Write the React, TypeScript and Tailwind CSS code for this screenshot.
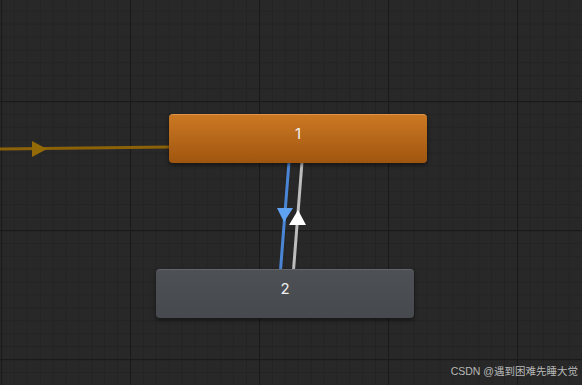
import React from 'react';

// Animator graph canvas: grid background, two state nodes, and transitions.
function GridBackground() {
  return (
    <svg className="absolute inset-0" width="582" height="385">
      <defs>
        <pattern id="minor" width="12.9" height="12.9" x="1" y="10.7" patternUnits="userSpaceOnUse">
          <path d="M0.5 0V12.9M0 0.5H12.9" stroke="#232323" strokeWidth="1" fill="none" />
        </pattern>
        <pattern id="major" width="129" height="129" x="1" y="101" patternUnits="userSpaceOnUse">
          <path d="M0.5 0V129M0 0.5H129" stroke="#1a1a1a" strokeWidth="1.4" fill="none" />
        </pattern>
      </defs>
      <rect width="582" height="385" fill="#282828" />
      <rect width="582" height="385" fill="url(#minor)" />
      <rect width="582" height="385" fill="url(#major)" />
    </svg>
  );
}

function Transitions() {
  return (
    <svg className="absolute inset-0" width="582" height="385">
      {/* entry transition */}
      <line x1="0" y1="149" x2="170" y2="147" stroke="#8c6208" strokeWidth="3" />
      <polygon points="32,141 47,149 32,157" fill="#946a08" />
      {/* 1 -> 2 */}
      <line x1="289" y1="162" x2="280.5" y2="270" stroke="#4b86d6" strokeWidth="3" />
      <polygon points="277,208 293,208 284,222" fill="#5fa2f2" />
      {/* 2 -> 1 */}
      <line x1="302" y1="162" x2="293.5" y2="270" stroke="#bdbdbd" strokeWidth="3" />
      <polygon points="289,225 306,225 298,210" fill="#ffffff" />
    </svg>
  );
}

function StateNode({ label, className }: { label: string; className: string }) {
  return (
    <div
      className={`absolute flex h-[49px] w-[258px] items-center justify-center rounded-[4px] pb-[10px] text-[15px] text-[#f0f0f0] shadow-[0_2px_4px_rgba(0,0,0,0.5)] ${className}`}
      style={{ fontFamily: 'Inter, "Noto Sans", sans-serif' }}
    >
      {label}
    </div>
  );
}

export default function App() {
  return (
    <div className="relative h-[385px] w-[582px] overflow-hidden bg-[#282828]">
      <GridBackground />
      <Transitions />
      <StateNode
        label="1"
        className="left-[169px] top-[114px] border-t border-[#e0944a] bg-gradient-to-b from-[#cb7823] to-[#a0560f]"
      />
      <StateNode
        label="2"
        className="left-[156px] top-[269px] border-t border-[#62666b] bg-gradient-to-b from-[#4d5054] to-[#46494d]"
      />
      <div
        className="absolute right-[4px] bottom-[5px] text-[10.5px] text-[#b8b8b8]"
        style={{ fontFamily: '"Liberation Sans", "Noto Sans CJK SC", sans-serif' }}
      >
        CSDN @遇到困难先睡大觉
      </div>
    </div>
  );
}
